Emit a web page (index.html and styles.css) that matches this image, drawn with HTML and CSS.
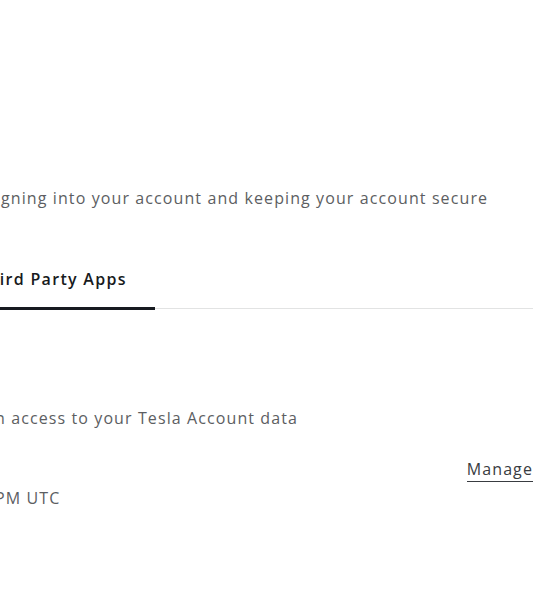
FILE: index.html
```
<!DOCTYPE html>
<html lang="en">
<head>
<meta charset="utf-8">
<title>Security</title>
<link rel="stylesheet" href="styles.css">
</head>
<body>
<main class="page">
  <p class="intro">gning into your account and keeping your account secure</p>

  <nav class="tabs">
    <a class="tab tab-active">Third Party Apps</a>
  </nav>

  <section class="apps">
    <p class="apps-desc">n access to your Tesla Account data</p>
    <div class="app-row">
      <div class="app-info">
        <p class="app-date">PM UTC</p>
      </div>
      <a class="manage">Manage</a>
    </div>
  </section>
</main>
</body>
</html>
```
FILE: styles.css
```
html, body {
  margin: 0;
  padding: 0;
  background: #ffffff;
  overflow: hidden;
}

body {
  font-family: "Open Sans", "Noto Sans", sans-serif;
  font-size: 16px;
  line-height: 24px;
  letter-spacing: 1.1px;
  color: #5c5e62;
}

.page {
  margin: 0 27px 0 0;
  padding-top: 186px;
}

p {
  margin: 0;
}

.intro {
  white-space: nowrap;
  margin-left: 1px;
}

.tabs {
  display: flex;
  margin-top: 57px;
  border-bottom: 1px solid #e2e3e3;
}

.tab {
  position: relative;
  display: block;
  margin-left: -22px;
  padding: 0 28px 17px 0;
  font-weight: 600;
  letter-spacing: 1.3px;
  color: #171a20;
  white-space: nowrap;
}

.tab-active::after {
  content: "";
  position: absolute;
  left: 0;
  right: 0;
  bottom: -2px;
  height: 3px;
  background: #171a20;
}

.apps {
  margin-top: 97px;
}

.apps-desc {
  margin-left: -5px;
  white-space: nowrap;
}

.app-row {
  display: flex;
  justify-content: space-between;
  align-items: flex-start;
  margin-top: 27px;
}

.app-info {
  padding-top: 29px;
}

.app-date {
  margin-left: -5px;
  white-space: nowrap;
}

.manage {
  display: inline-block;
  border-bottom: 1px solid #393c41;
  color: #393c41;
  text-decoration: none;
  cursor: pointer;
}
```
